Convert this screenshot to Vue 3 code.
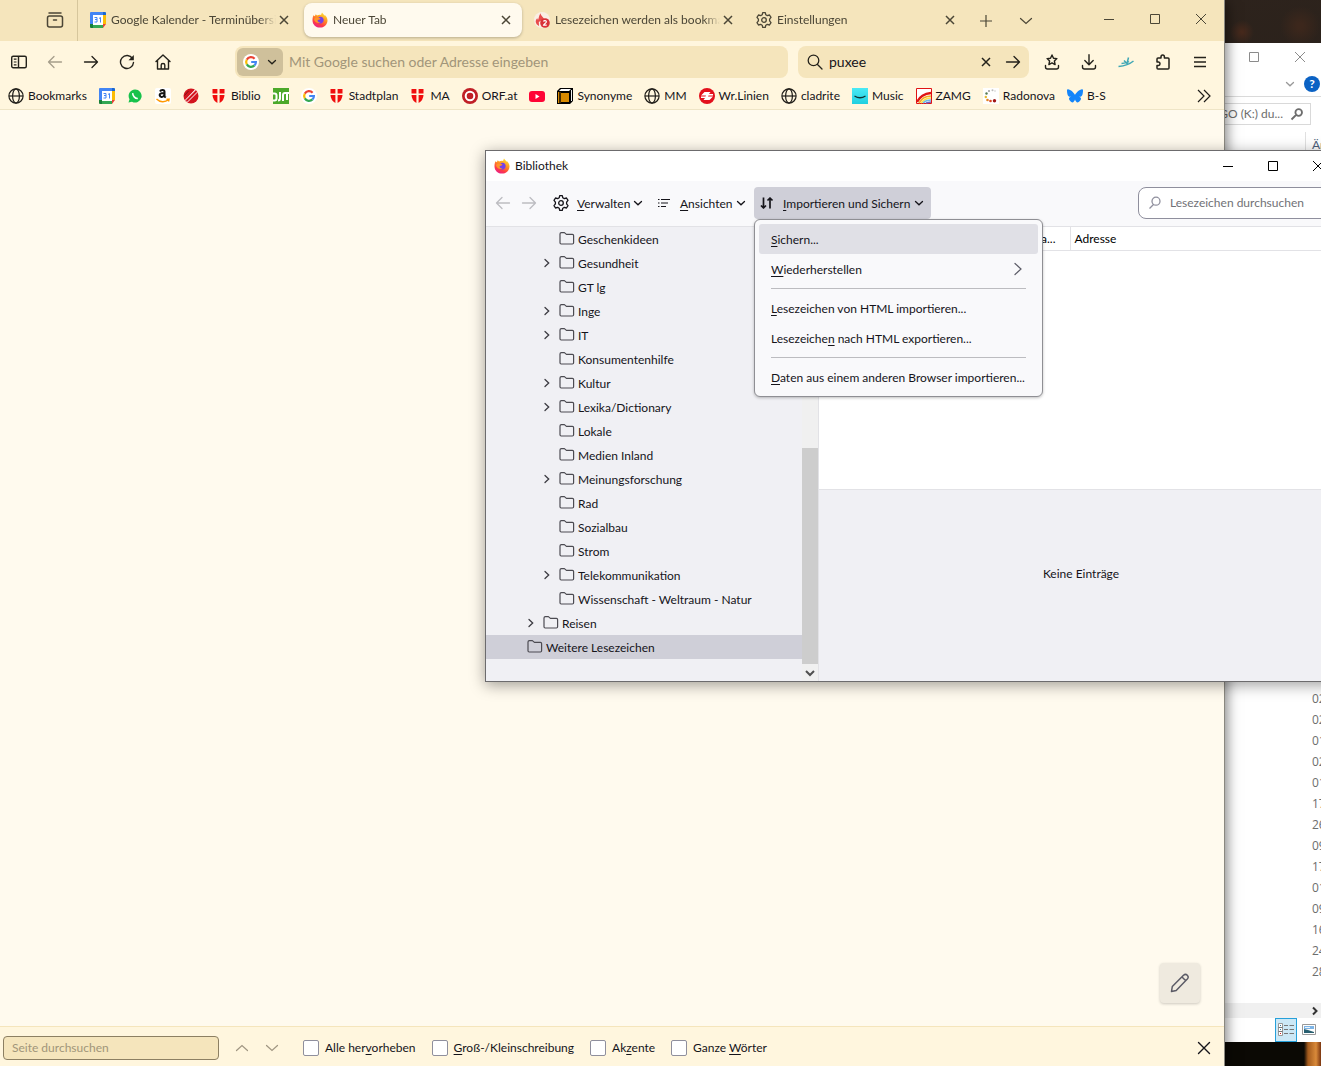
<script setup>
import { ref } from 'vue'

const tabs = [
  { icon: 'calendar', title: 'Google Kalender - Terminübersicht' },
  { icon: 'firefox', title: 'Neuer Tab', active: true },
  { icon: 'flame', title: 'Lesezeichen werden als bookmarks' },
  { icon: 'gear', title: 'Einstellungen' },
]

const bookmarks = [
  { icon: 'globe', label: 'Bookmarks' },
  { icon: 'calendar', name: 'Kalender' },
  { icon: 'whatsapp', name: 'WhatsApp' },
  { icon: 'amazon', name: 'Amazon' },
  { icon: 'redball', name: 'Sport' },
  { icon: 'shield', label: 'Biblio' },
  { icon: 'green', name: 'Forum' },
  { icon: 'google', name: 'Google' },
  { icon: 'shield', label: 'Stadtplan' },
  { icon: 'shield', label: 'MA' },
  { icon: 'orf', label: 'ORF.at' },
  { icon: 'youtube', name: 'YouTube' },
  { icon: 'book', label: 'Synonyme' },
  { icon: 'globe', label: 'MM' },
  { icon: 'linien', label: 'Wr.Linien' },
  { icon: 'globe', label: 'cladrite' },
  { icon: 'music', label: 'Music' },
  { icon: 'zamg', label: 'ZAMG' },
  { icon: 'radonova', label: 'Radonova' },
  { icon: 'butterfly', label: 'B-S' },
]

const folders = [
  { name: 'Geschenkideen', level: 2 },
  { name: 'Gesundheit', level: 2, open: true },
  { name: 'GT lg', level: 2 },
  { name: 'Inge', level: 2, open: true },
  { name: 'IT', level: 2, open: true },
  { name: 'Konsumentenhilfe', level: 2 },
  { name: 'Kultur', level: 2, open: true },
  { name: 'Lexika/Dictionary', level: 2, open: true },
  { name: 'Lokale', level: 2 },
  { name: 'Medien Inland', level: 2 },
  { name: 'Meinungsforschung', level: 2, open: true },
  { name: 'Rad', level: 2 },
  { name: 'Sozialbau', level: 2 },
  { name: 'Strom', level: 2 },
  { name: 'Telekommunikation', level: 2, open: true },
  { name: 'Wissenschaft - Weltraum - Natur', level: 2 },
  { name: 'Reisen', level: 1, open: true },
  { name: 'Weitere Lesezeichen', level: 0, selected: true },
]

// Labels are split around their access key: [before, key, after]
const menu = [
  { label: ['', 'S', 'ichern...'], hover: true },
  { label: ['', 'W', 'iederherstellen'], sub: true },
  null,
  { label: ['', 'L', 'esezeichen von HTML importieren...'] },
  { label: ['Lesezeiche', 'n', ' nach HTML exportieren...'] },
  null,
  { label: ['', 'D', 'aten aus einem anderen Browser importieren...'] },
]

const findOptions = [
  ['Alle her', 'v', 'orheben'],
  ['', 'G', 'roß-/Kleinschreibung'],
  ['Ak', 'z', 'ente'],
  ['Ganze ', 'W', 'örter'],
]

const dates = ['02', '02', '01', '02', '01', '17', '26', '09', '17', '01', '09', '16', '24', '28']

const query = ref('puxee')
</script>

<template>
  <div class="desktop">
    <svg class="sprite" aria-hidden="true">
      <defs>
        <linearGradient id="fox" x1="0.8" y1="0" x2="0.3" y2="1">
          <stop offset="0" stop-color="#ffe83a" /><stop offset="0.4" stop-color="#ff9820" />
          <stop offset="0.75" stop-color="#ff3b45" /><stop offset="1" stop-color="#e8208a" />
        </linearGradient>
        <linearGradient id="aqua" x1="0" y1="0" x2="0" y2="1">
          <stop offset="0" stop-color="#4aeaf5" /><stop offset="1" stop-color="#20cfe0" />
        </linearGradient>
      </defs>
      <symbol id="firefox" viewBox="0 0 16 16">
        <path fill="url(#fox)" d="M1.5 3.2 2.8 4.2 3.8 2.2 5 3.6C6.4 2.8 8 2.7 9 3L10 .4C11 2 12 2.4 12.6 3.6L13.4 3.4C14.8 5 15.6 6.8 15.5 8.7 15.2 12.8 12 15.6 8 15.6S.6 12.6.5 8.4C.5 6.4.7 4.8 1.5 3.2Z" />
        <path fill="#7540e8" d="M8.3 4.7C10.8 4.8 12 6.6 11.6 8.7 11.1 10.9 9.2 11.9 7.3 11.4 5.4 10.9 4.5 9.5 4.8 7.8L7.2 7.5C8.6 7.2 8.8 6.6 7.8 6.2L6.3 5.5C6.8 4.9 7.6 4.7 8.3 4.7Z" />
        <path fill="#ff9428" d="M2 7C3 5 5 5 6.4 6.2L8 6.6C8.4 7.4 6 7.8 5.6 8.3 5.5 9.9 6.8 10.5 8.6 9.8 7 12.2 2.6 10.6 2 7Z" />
      </symbol>
      <symbol id="calendar" viewBox="0 0 16 16">
        <path fill="#4285f4" d="M1 0h12v3H3v9H0V1Q0 0 1 0Z" /><path fill="#1967d2" d="M13 0h2q1 0 1 1v2h-3Z" />
        <path fill="#fbbc04" d="M13 3h3v9h-3Z" /><path fill="#34a853" d="M3 12h10v4H3Z" />
        <path fill="#188038" d="M0 12h3v4H1q-1 0-1-1Z" /><path fill="#ea4335" d="M13 12h3l-3 4Z" /><path fill="#fff" d="M3 3h10v10H3Z" />
        <path fill="none" stroke="#4285f4" stroke-width="1" d="M4.500 5.500h2.500v4.500H4.500M5 7.500h2M9 6.500l1.500-1v5" />
      </symbol>
      <symbol id="flame" viewBox="0 0 16 16">
        <circle cx="8" cy="8" r="8" fill="#faeee4" />
        <path fill="#e84c4c" d="M5 14C1 12 1 8 3.3 6.3L4 8C5 6 4.6 4 6.500 1.200 7 4 8.600 4 10 7L4.800 10Z" />
        <circle cx="11" cy="11" r="4.800" fill="#d93237" />
        <path fill="none" stroke="#fff" stroke-width="1.200" d="M9.500 9.500C10 8 12.600 8.300 12.400 10 12.300 11 9.600 12 9.500 13.200h3.200" />
      </symbol>
      <symbol id="gear" viewBox="0 0 16 16">
        <g fill="none" stroke="currentColor" stroke-width="1.300" stroke-linejoin="round"><circle cx="8" cy="8" r="2.300" />
        <path d="M6.700.700h2.600l.5 2.100 1.500.8 2.200-.6 1.500 2.400-1.400 1.700v1.800l1.400 1.700-1.500 2.400-2.200-.6-1.500.8-.5 2.100H6.700l-.5-2.100-1.500-.8-2.200.6L1 10.600l1.400-1.700V7.100L1 5.400 2.500 3l2.200.6 1.500-.8Z" /></g>
      </symbol>
      <symbol id="globe" viewBox="0 0 16 16">
        <g fill="none" stroke="#1f1d18" stroke-width="1.200"><circle cx="8" cy="8" r="7.100" /><ellipse cx="8" cy="8" rx="3.400" ry="7.100" /><path d="M1 8h14" /></g>
      </symbol>
      <symbol id="whatsapp" viewBox="0 0 16 16">
        <path fill="#17c24b" d="M8 1.500a6.500 6.500 0 1 1-3 12.200L1.500 14.500l1-3.200A6.500 6.500 0 0 1 8 1.500Z" />
        <path fill="none" stroke="#fff" stroke-width="1.600" d="M5.800 5.200C5.400 7.600 8.200 10.800 10.800 10.400" />
      </symbol>
      <symbol id="amazon" viewBox="0 0 16 16">
        <rect width="16" height="16" rx="2" fill="#fff" />
        <path fill="none" stroke="#111" stroke-width="2" d="M5 3.500C6 1.200 9.500 1.500 9.500 3.800V8.500L10.800 9.600M9.400 5C5 5 4.400 6.200 4.700 7.600 5.200 9.600 8.500 9.400 9.300 7" />
        <path fill="none" stroke="#f90" stroke-width="1.400" d="M1.500 11C5 14.500 10 14.500 13.500 11.800M11.500 11.300h2.600l-.6 2.200" />
      </symbol>
      <symbol id="redball" viewBox="0 0 16 16">
        <circle cx="8" cy="8" r="7.500" fill="#d3151e" /><path fill="#fff" d="M2 12 12 1.500l2.500 3L4.500 14.500Z" /><path stroke="#d3151e" stroke-width="2.200" d="M3.500 13l10-10" /><path stroke="#7d1016" d="M1.500 7.500l4-4.500" />
      </symbol>
      <symbol id="shield" viewBox="0 0 16 16">
        <path fill="#f00d0d" d="M1.500 1H6.400v4.500H1.500ZM8.600 1h4.900v4.500H8.600ZM1.500 7h4.900v8Q1.600 12 1.500 7ZM8.600 7h4.900q-.1 5-4.900 8Z" />
      </symbol>
      <symbol id="green" viewBox="0 0 16 16">
        <path fill="#4ca92b" d="M0 0h16v16H0Z" /><path fill="none" stroke="#fff" stroke-width="2" d="M0 5.500h1.500q2 0 2 2v3q0 2-2 2H0M7 4v6.500q0 2-2 2M10 13V7q0-2 2-2h4M14 5v7" />
      </symbol>
      <symbol id="google" viewBox="0 0 16 16">
        <circle cx="8" cy="8" r="8" fill="#fff" /><g fill="none" stroke-width="2.200">
        <path stroke="#ea4335" d="M3.800 5.600A4.900 4.900 0 0 1 11.600 4.700" /><path stroke="#fbbc05" d="M3.800 10.400A5 5 0 0 1 3.800 5.600" />
        <path stroke="#34a853" d="M11.500 11.400A4.900 4.900 0 0 1 3.800 10.400" /><path stroke="#4285f4" d="M8.200 8h4.700Q12.900 10.200 11.500 11.400" /></g>
      </symbol>
      <symbol id="orf" viewBox="0 0 16 16"><circle cx="8" cy="8" r="8" fill="#c01f26" /><circle cx="8" cy="8" r="4.300" fill="none" stroke="#fff" stroke-width="2" /></symbol>
      <symbol id="youtube" viewBox="0 0 16 16"><rect x="0" y="3" width="16" height="11" rx="3" fill="#ff0435" /><path fill="#fff" d="M6.500 6v5L10.500 8.500Z" /></symbol>
      <symbol id="book" viewBox="0 0 16 16"><path d="M3 0h13v13l-3 3H0V3Z" /><path fill="#fff" d="M4 1h10l-2 2H2Z" /><path fill="#d88a00" d="M1 4h1v11H1ZM4 5h8v9H4Z" /><path stroke="#eee" d="M14.500 2v11" /><path stroke="#8c5700" d="M3 4v11" /></symbol>
      <symbol id="linien" viewBox="0 0 16 16"><circle cx="8" cy="8" r="8" fill="#e3101c" /><path fill="#fff" d="M5.500 4h6L10 6H14v1.500H9.500L9 8.500h5L10.500 12h-6L6 10H2V8.500h4.500L7 7.500H2Z" /></symbol>
      <symbol id="music" viewBox="0 0 16 16"><path fill="url(#aqua)" d="M0 0h16v16H0Z" /><path fill="none" stroke="#133" stroke-width="1.300" d="M2.500 8Q8 11.500 13.500 8" /></symbol>
      <symbol id="zamg" viewBox="0 0 16 16">
        <path fill="#fff" stroke="#e01414" d="M.5.500h15v15H.5Z" /><g fill="none" stroke-width="1.600"><path stroke="#e01414" stroke-width="2.400" d="M1 14Q5 6 15 5" /><path stroke="#f7a928" d="M3 15Q7 8 15 8" /><path stroke="#f8e04a" d="M5 15Q9 10 15 10" /><path stroke="#6bb9e8" d="M7 15Q10 12 15 12" /><path stroke="#7060c0" d="M10 15l5-1" /></g>
      </symbol>
      <symbol id="radonova" viewBox="0 0 16 16">
        <path fill="#fff" d="M0 0h16v16H0Z" /><circle cx="6" cy="3" r="1" fill="#999" /><circle cx="9.500" cy="2.300" r="1" fill="#bbb" /><circle cx="12" cy="3" r=".8" fill="#ccc" />
        <circle cx="3.500" cy="5.500" r="1.200" fill="#567b54" /><circle cx="2.800" cy="9" r="1.200" fill="#e3b92c" /><circle cx="4.500" cy="12" r="1.300" fill="#e48325" /><circle cx="7.500" cy="13" r="1.300" fill="#d42" /><circle cx="11.500" cy="12.800" r="1.700" fill="#a01616" />
      </symbol>
      <symbol id="butterfly" viewBox="0 0 16 16"><path fill="#1485fa" d="M8 7C7 4.500 3.500 1.500 1 1.200-.3 1-.1 3 .3 5.500.6 8.300 2 9 4.300 8.800 1.500 9.500 1.500 11 3 12.800 5.500 16 7 14 8 11.500 9 14 10.500 16 13 12.800 14.500 11 14.500 9.500 11.700 8.800 14 9 15.400 8.300 15.700 5.500 16.100 3 16.300 1 15 1.200 12.500 1.500 9 4.500 8 7Z" /></symbol>
      <symbol id="close" viewBox="0 0 16 16"><path stroke="currentColor" stroke-width="1.500" d="m4 4 8 8m0-8-8 8" /></symbol>
      <symbol id="winclose" viewBox="0 0 16 16"><path stroke="currentColor" d="m3 3 10 10m0-10L3 13" /></symbol>
      <symbol id="bigclose" viewBox="0 0 16 16"><path stroke="currentColor" stroke-width="1.400" stroke-linecap="round" d="m2.500 2.500 11 11m0-11-11 11" /></symbol>
      <symbol id="winmax" viewBox="0 0 16 16"><path fill="none" stroke="currentColor" d="M3.500 3.500h9v9h-9Z" /></symbol>
      <symbol id="winmin" viewBox="0 0 16 16"><path stroke="currentColor" d="M3 8.500h10" /></symbol>
      <symbol id="plus" viewBox="0 0 16 16"><path stroke="currentColor" stroke-width="1.200" d="M2 8h12M8 2v12" /></symbol>
      <symbol id="down" viewBox="0 0 16 16"><path fill="none" stroke="currentColor" stroke-width="1.200" stroke-linecap="round" d="m2.500 5.500 5.500 5 5.500-5" /></symbol>
      <symbol id="smalldown" viewBox="0 0 10 10"><path fill="none" stroke="currentColor" stroke-width="1.300" stroke-linecap="round" d="m1.500 3.500 3.500 3.300 3.500-3.300" /></symbol>
      <symbol id="bolddown" viewBox="0 0 10 10"><path fill="none" stroke="currentColor" stroke-width="2" d="m1 3 4 4 4-4" /></symbol>
      <symbol id="boldright" viewBox="0 0 10 10"><path fill="none" stroke="currentColor" stroke-width="2" d="m3 1.500 3.500 3.500L3 8.500" /></symbol>
      <symbol id="twisty" viewBox="0 0 10 10"><path fill="none" stroke="#3c3b42" stroke-width="1.300" stroke-linecap="round" d="m3 1.500 3.700 3.500L3 8.500" /></symbol>
      <symbol id="up" viewBox="0 0 16 16"><path fill="none" stroke="currentColor" stroke-width="1.200" stroke-linecap="round" d="m2.500 10.500 5.500-5 5.500 5" /></symbol>
      <symbol id="right" viewBox="0 0 16 16"><path fill="none" stroke="currentColor" stroke-width="1.200" stroke-linecap="round" d="m5 2.500 6 5.500-6 5.500" /></symbol>
      <symbol id="box" viewBox="0 0 18 16"><g fill="none" stroke="currentColor" stroke-width="1.500" stroke-linecap="round"><path d="M3 1h12" /><rect x="1.500" y="4" width="15" height="11" rx="2" /><path d="M7.500 8h3" /></g></symbol>
      <symbol id="sidebar" viewBox="0 0 16 16"><g fill="none" stroke="currentColor" stroke-width="1.400"><rect x=".7" y="2.200" width="14.600" height="11.600" rx="1.500" /><path d="M7.500 2v12" /><path stroke-width="1.200" d="M2.800 5.200h2.700M2.800 8h2.700M2.800 10.800h2.700" /></g></symbol>
      <symbol id="back" viewBox="0 0 16 16"><path fill="none" stroke="currentColor" stroke-width="1.300" stroke-linecap="round" stroke-linejoin="round" d="M14.500 8h-13M7 2.500 1.500 8 7 13.500" /></symbol>
      <symbol id="forward" viewBox="0 0 16 16"><path fill="none" stroke="currentColor" stroke-width="1.300" stroke-linecap="round" stroke-linejoin="round" d="M1.500 8h13M9 2.500 14.500 8 9 13.500" /></symbol>
      <symbol id="reload" viewBox="0 0 16 16"><path fill="none" stroke="currentColor" stroke-width="1.400" stroke-linecap="round" d="M13.500 4.500A6.500 6.500 0 1 0 14.500 8.500" /><path fill="currentColor" d="M14.800 1v5.300H9.500Z" /></symbol>
      <symbol id="home" viewBox="0 0 16 16"><path fill="none" stroke="currentColor" stroke-width="1.400" stroke-linejoin="round" stroke-linecap="round" d="M1 7.500 8 1l7 6.500M2.500 6.500V15h11V6.500M6.200 15v-4q0-1.500 1.800-1.500T9.800 11v4" /></symbol>
      <symbol id="search" viewBox="0 0 16 16"><path fill="none" stroke="currentColor" stroke-width="1.300" stroke-linecap="round" d="M10.500 10.500 15 15M11.800 6.400A5.300 5.300 0 1 1 1.200 6.400a5.300 5.300 0 0 1 10.600 0Z" /></symbol>
      <symbol id="lens" viewBox="0 0 16 16"><path fill="none" stroke="currentColor" stroke-width="1.300" d="M6.500 9.500 2.500 13.500M13 6.200a4 4 0 1 1-8 0 4 4 0 0 1 8 0Z" /></symbol>
      <symbol id="boldlens" viewBox="0 0 16 16"><path fill="none" stroke="currentColor" stroke-width="1.800" d="M7 9 2.500 13.500M13 6.500a3.300 3.300 0 1 1-6.600 0 3.300 3.300 0 0 1 6.600 0Z" /></symbol>
      <symbol id="star" viewBox="0 0 16 16"><path fill="none" stroke="currentColor" stroke-width="1.400" stroke-linejoin="round" stroke-linecap="round" d="m8 1 1.500 3.200 3.400.4-2.500 2.400.7 3.600L8 8.900l-3.100 1.700.7-3.600-2.500-2.400 3.400-.4ZM1.500 11.500v1.500q0 2 2 2h9q2 0 2-2v-1.500" /></symbol>
      <symbol id="download" viewBox="0 0 16 16"><path fill="none" stroke="currentColor" stroke-width="1.400" stroke-linejoin="round" stroke-linecap="round" d="M8 .800v9.500M3.800 6.500 8 10.700l4.200-4.200M1.500 11.500v1.500q0 2 2 2h9q2 0 2-2v-1.500" /></symbol>
      <symbol id="plane" viewBox="0 0 16 16"><path fill="none" stroke="#3fa7b5" stroke-width="1.500" d="M.5 12.500Q10 11.500 15.500 7M3.500 9.500Q9 9 11 7.500M6 6.500l3 3L10.500 3.500" /></symbol>
      <symbol id="puzzle" viewBox="0 0 16 16"><path fill="none" stroke="currentColor" stroke-width="1.500" stroke-linejoin="round" d="M2 8V5q0-1 1-1h3V3q0-2 1.700-2T9.400 3v1H13q1 0 1 1v9q0 1-1 1H3q-1 0-1-1v-2.500h1.500q1.500-.2 1.500-1.700T3.500 8Z" /></symbol>
      <symbol id="menu" viewBox="0 0 16 16"><path stroke="currentColor" stroke-width="1.500" d="M2 3.500h12M2 8h12M2 12.500h12" /></symbol>
      <symbol id="more" viewBox="0 0 16 16"><path fill="none" stroke="#1f1d18" stroke-width="1.200" d="m2 2 6 6-6 6M8 2l6 6-6 6" /></symbol>
      <symbol id="pencil" viewBox="0 0 20 20"><path fill="none" stroke="currentColor" stroke-width="1.500" stroke-linejoin="round" d="m1.500 18.500.8-5L13.500 2.200q2-1.700 3.800 0 1.800 1.900 0 3.900L6.200 17.500ZM12 4l4 4" /></symbol>
      <symbol id="list" viewBox="0 0 14 12"><path stroke="currentColor" stroke-width="1.200" d="M1 2.500h1.500M4 2.500h9M1 6h1.500M4 6h7M1 9.500h1.500M4 9.500h5" /></symbol>
      <symbol id="arrows" viewBox="0 0 14 14"><path fill="none" stroke="currentColor" stroke-width="1.700" stroke-linejoin="round" d="M3.500 1.500v10.500M1 9.500 3.500 12 6 9.500M10 12.500V2M7.500 4.500 10 2l2.500 2.500" /></symbol>
      <symbol id="folder" viewBox="0 0 16 16"><path fill="none" stroke="#4c4b52" stroke-width="1.200" stroke-linejoin="round" d="M1 3q0-1.400 1.400-1.400h3l2 1.800h6q1.200 0 1.200 1.200v7.200q0 1.200-1.200 1.200H2.200Q1 13 1 11.800Z" /></symbol>
      <symbol id="details" viewBox="0 0 18 14"><path fill="#fff" stroke="#999" d="M1.500.500h4v12h-4Z" /><path stroke="#777" d="M7 2.500h4M12.500 2.500h4.500M7 6.500h4M12.500 6.500h4.500M7 10.500h4M12.500 10.500h4.500M1.500 4.500h4M1.500 8.500h4" /><path stroke="#c22" d="M3 10.500h1" /><path stroke="#379" d="M3 2.500h1M3 6.500h1" /></symbol>
      <symbol id="picture" viewBox="0 0 14 12"><path fill="#fff" stroke="#999" d="M.5.500h13v10H.5Z" /><path fill="#7db4e6" d="M2 2h10v3H2Z" /><path fill="#285f70" d="M2 5l4 1 6 2v1H2Z" /><path fill="#eaf4fb" d="M3 3h5v1H3Z" /></symbol>
    </svg>

    <section class="explorer">
      <header class="ex-title">
        <button aria-label="Maximieren"><svg class="i16"><use href="#winmax" /></svg></button>
        <button aria-label="Schließen"><svg class="i16"><use href="#winclose" /></svg></button>
      </header>
      <div class="ex-ribbon">
        <svg class="i10"><use href="#smalldown" /></svg>
        <button class="help">?</button>
      </div>
      <div class="ex-address">
        <div class="ex-search"><span>GO (K:) du...</span><svg class="i16"><use href="#boldlens" /></svg></div>
      </div>
      <div class="ex-head"><span>Än</span></div>
      <ul class="ex-list"><li v-for="(d, i) in dates" :key="i">{{ d }}</li></ul>
      <div class="ex-scroll"><svg class="i10"><use href="#boldright" /></svg></div>
      <footer class="ex-status">
        <button class="view on" aria-label="Details"><svg width="18" height="14"><use href="#details" /></svg></button>
        <button class="view" aria-label="Große Symbole"><svg width="14" height="12"><use href="#picture" /></svg></button>
      </footer>
    </section>

    <section class="browser">
      <div class="tabstrip">
        <button class="view-btn" aria-label="Firefox View"><svg width="18" height="16"><use href="#box" /></svg></button>
        <div v-for="t in tabs" :key="t.title" class="tab" :class="{ active: t.active }">
          <svg class="i16"><use :href="'#' + t.icon" /></svg>
          <span class="tab-title">{{ t.title }}</span>
          <button aria-label="Tab schließen"><svg class="i16"><use href="#close" /></svg></button>
        </div>
        <button class="new-tab" aria-label="Neuer Tab"><svg class="i16"><use href="#plus" /></svg></button>
        <button class="all-tabs" aria-label="Alle Tabs"><svg class="i16"><use href="#down" /></svg></button>
        <div class="win-controls">
          <button aria-label="Minimieren"><svg class="i16"><use href="#winmin" /></svg></button>
          <button aria-label="Maximieren"><svg class="i16"><use href="#winmax" /></svg></button>
          <button aria-label="Schließen"><svg class="i16"><use href="#winclose" /></svg></button>
        </div>
      </div>

      <div class="navbar">
        <div class="nav-buttons">
          <button aria-label="Seitenleiste"><svg class="i16"><use href="#sidebar" /></svg></button>
          <button aria-label="Zurück" disabled><svg class="i16"><use href="#back" /></svg></button>
          <button aria-label="Vor"><svg class="i16"><use href="#forward" /></svg></button>
          <button aria-label="Neu laden"><svg class="i16"><use href="#reload" /></svg></button>
          <button aria-label="Startseite"><svg class="i16"><use href="#home" /></svg></button>
        </div>
        <div class="urlbar">
          <button class="engine" aria-label="Suchmaschine"><svg class="i16"><use href="#google" /></svg><svg class="i10"><use href="#smalldown" /></svg></button>
          <input type="text" aria-label="Adresse" placeholder="Mit Google suchen oder Adresse eingeben" />
        </div>
        <div class="searchbar">
          <svg class="i16"><use href="#search" /></svg>
          <input v-model="query" type="text" aria-label="Suche" />
          <button aria-label="Leeren"><svg class="i16"><use href="#close" /></svg></button>
          <button aria-label="Suchen"><svg class="i16"><use href="#forward" /></svg></button>
        </div>
        <div class="nav-tools">
          <button v-for="n in ['star', 'download', 'plane', 'puzzle', 'menu']" :key="n" :aria-label="n"><svg class="i16"><use :href="'#' + n" /></svg></button>
        </div>
      </div>

      <nav class="bookmarks">
        <a v-for="(b, i) in bookmarks" :key="i" href="#" :aria-label="b.label || b.name"><svg class="i16"><use :href="'#' + b.icon" /></svg><span v-if="b.label">{{ b.label }}</span></a>
        <button class="overflow" aria-label="Weitere Lesezeichen anzeigen"><svg class="i16"><use href="#more" /></svg></button>
      </nav>

      <main class="page">
        <button class="customize" aria-label="Anpassen"><svg width="20" height="20"><use href="#pencil" /></svg></button>
      </main>

      <div class="findbar">
        <input type="text" aria-label="Seite durchsuchen" placeholder="Seite durchsuchen" />
        <div class="find-arrows">
          <button aria-label="Vorheriges"><svg class="i16"><use href="#up" /></svg></button>
          <button aria-label="Nächstes"><svg class="i16"><use href="#down" /></svg></button>
        </div>
        <label v-for="o in findOptions" :key="o[1]"><input type="checkbox" /><span>{{ o[0] }}<u>{{ o[1] }}</u>{{ o[2] }}</span></label>
        <button class="find-close" aria-label="Schließen"><svg class="i16"><use href="#bigclose" /></svg></button>
      </div>
    </section>

    <section class="library">
      <header class="lib-title">
        <svg class="i16"><use href="#firefox" /></svg><span>Bibliothek</span>
        <div class="lib-controls">
          <button aria-label="Minimieren"><svg class="i16"><use href="#winmin" /></svg></button>
          <button aria-label="Maximieren"><svg class="i16"><use href="#winmax" /></svg></button>
          <button aria-label="Schließen"><svg class="i16"><use href="#winclose" /></svg></button>
        </div>
      </header>
      <div class="lib-tools">
        <div class="history">
          <button aria-label="Zurück"><svg class="i16"><use href="#back" /></svg></button>
          <button aria-label="Vor"><svg class="i16"><use href="#forward" /></svg></button>
        </div>
        <button class="tool manage"><svg class="i16"><use href="#gear" /></svg><span><u>V</u>erwalten</span><svg class="i10"><use href="#smalldown" /></svg></button>
        <button class="tool views"><svg width="14" height="12"><use href="#list" /></svg><span><u>A</u>nsichten</span><svg class="i10"><use href="#smalldown" /></svg></button>
        <div class="import">
          <button class="tool pressed"><svg width="14" height="14"><use href="#arrows" /></svg><span><u>I</u>mportieren und Sichern</span><svg class="i10"><use href="#smalldown" /></svg></button>
          <div class="menu" role="menu">
            <template v-for="(m, i) in menu" :key="i">
              <hr v-if="!m" />
              <button v-else role="menuitem" :class="{ hover: m.hover }"><span>{{ m.label[0] }}<u>{{ m.label[1] }}</u>{{ m.label[2] }}</span><svg v-if="m.sub" class="i16"><use href="#right" /></svg></button>
            </template>
          </div>
        </div>
        <label class="lib-search"><svg class="i16"><use href="#lens" /></svg><input type="text" aria-label="Lesezeichen durchsuchen" placeholder="Lesezeichen durchsuchen" /></label>
      </div>
      <div class="lib-body">
        <ul class="tree">
          <li v-for="f in folders" :key="f.name" :class="['level-' + f.level, { selected: f.selected }]">
            <svg class="i10 twisty"><use v-if="f.open" href="#twisty" /></svg>
            <svg class="i16"><use href="#folder" /></svg><span>{{ f.name }}</span>
          </li>
        </ul>
        <div class="scrollbar"><div class="thumb"></div><svg class="i10"><use href="#bolddown" /></svg></div>
        <div class="content">
          <table>
            <thead><tr><th class="tags">a...</th><th>Adresse</th></tr></thead>
          </table>
          <div class="entries"></div>
          <div class="empty">Keine Einträge</div>
        </div>
      </div>
    </section>
  </div>
</template>

<style>
body { margin: 0; overflow: hidden; }
</style>

<style scoped>
* { box-sizing: border-box; }
.desktop {
  position: relative; height: 100vh; overflow: hidden; font: 12px/16px Lato, "Open Sans", sans-serif; color: #15141a;
  background: linear-gradient(90deg, transparent 0 1304px, #a35a1c 1308px, #d98a3a 1316px, #7a3510) bottom / 100% 24px no-repeat,
    linear-gradient(#0b0904, #0b0904) bottom / 100% 24px no-repeat,
    radial-gradient(circle at 1242px 32px, #46291c 0 1px, transparent 12px),
    radial-gradient(circle at 1300px 26px, #3c271c 0 3px, transparent 20px),
    linear-gradient(170deg, #33271f, #211b17 50%, #2c2019);
}
.sprite { position: absolute; width: 0; height: 0; }
svg { display: block; flex: none; }
.i16 { width: 16px; height: 16px; }
.i10 { width: 10px; height: 10px; }
button { display: flex; align-items: center; justify-content: center; padding: 0; border: 0; background: none; color: inherit; font: inherit; }
input { min-width: 0; margin: 0; border: 0; outline: 0; background: none; font: inherit; color: inherit; padding: 0; }
ul { list-style: none; margin: 0; padding: 0; }
u { text-underline-offset: 2px; }
span { white-space: nowrap; }

.explorer { position: absolute; left: 1200px; right: 0; top: 43px; bottom: 24px; display: flex; flex-direction: column; background: #fff; color: #6d6d6d; }
.ex-title { display: flex; justify-content: flex-end; gap: 30px; height: 28px; align-items: center; padding-right: 13px; color: #8b8b8b; }
.ex-ribbon { display: flex; justify-content: flex-end; align-items: center; gap: 9px; height: 26px; padding-right: 1px; border-bottom: 1px solid #dadada; color: #999; }
.help { width: 16px; height: 16px; border-radius: 50%; background: #0b62c4; color: #fff; font-weight: 700; }
.ex-address { display: flex; height: 35px; padding: 6px 10px 7px 0; }
.ex-search { flex: 1; display: flex; align-items: center; justify-content: flex-end; gap: 6px; padding-right: 5px; border: 1px solid #d9d9d9; }
.ex-head { display: flex; justify-content: flex-end; height: 26px; color: #4c607a; }
.ex-head span { width: 16px; overflow: hidden; border-left: 1px solid #e0e0e0; padding: 5px 0 0 6px; }
.ex-list { flex: 1; display: flex; flex-direction: column; justify-content: flex-end; align-items: flex-end; padding-bottom: 21px; font-family: "Open Sans", sans-serif; }
.ex-list li { width: 9px; line-height: 21px; }
.ex-scroll { display: flex; justify-content: flex-end; align-items: center; height: 15px; background: #f0f0f0; color: #333; padding-right: 1px; }
.ex-status { display: flex; justify-content: flex-end; height: 24px; }
.view { width: 24px; }
.view.on { width: 22px; border: 1px solid #26a0da; background: #cce8f6; }

.browser { position: absolute; inset: 0 97px 0 0; display: flex; flex-direction: column; background: #fffaee; box-shadow: 1px 0 0 #8a8880, 3px 2px 12px rgba(0, 0, 0, .5); }
.tabstrip { display: flex; align-items: stretch; height: 41px; background: #f5e5bc; color: #4b4636; }
.view-btn { width: 78px; padding: 0 0 2px 32px; border-right: 1px solid #d6c69c; margin-right: 4px; }
.tab { display: flex; align-items: center; width: 218px; height: 34px; margin: 3px 4px 0 0; padding: 0 8px; gap: 5px; border-radius: 8px; }
.tab.active { background: #fffaee; box-shadow: 0 1px 3px rgba(0, 0, 0, .25); }
.tab-title { flex: 1; overflow: hidden; margin-right: -5px; mask-image: linear-gradient(90deg, #000 calc(100% - 16px), transparent); }
.tab-title + button { width: 16px; }
.new-tab { width: 40px; margin-left: -4px; }
.all-tabs { width: 40px; }
.win-controls { display: flex; gap: 30px; margin-left: auto; padding: 0 15px 3px 0; }
.navbar { display: flex; align-items: center; height: 41px; padding: 0 16px 0 11px; background: #fff6de; color: #24221b; }
.nav-buttons { display: flex; gap: 20px; }
.nav-buttons button:disabled { color: #a69e8b; }
.urlbar { flex: 1; display: flex; align-items: center; height: 32px; margin-left: 64px; padding: 2px; border-radius: 8px; background: #f5e5bc; font-size: 14px; }
.engine { gap: 8px; width: 46px; height: 28px; border-radius: 6px; background: #cfc09b; margin-right: 6px; }
.urlbar input { flex: 1; }
input::placeholder { color: #a1957a; opacity: 1; }
.searchbar { display: flex; align-items: center; width: 231px; height: 32px; margin: 0 15px 0 10px; padding: 0 8px 0 9px; border-radius: 8px; background: #f5e5bc; font-size: 14px; }
.searchbar input { flex: 1; padding-left: 6px; color: #15141a; }
.searchbar button { margin-left: 11px; }
.nav-tools { display: flex; gap: 21px; }
.bookmarks { display: flex; align-items: center; gap: 12px; height: 28px; padding: 0 12px 0 8px; background: #fff6de; border-bottom: 1px solid #efe5c6; }
.bookmarks a { display: flex; align-items: center; gap: 4px; color: #15141a; text-decoration: none; }
.overflow { margin-left: auto; }
.page { flex: 1; display: flex; justify-content: flex-end; align-items: flex-end; padding: 0 24px 23px 0; }
.customize { width: 40px; height: 40px; border-radius: 4px; background: #efeadf; color: #5b5b66; box-shadow: 0 1px 3px rgba(0, 0, 0, .2); }
.findbar { display: flex; align-items: center; height: 40px; padding: 2px 12px 0 3px; background: #fff6de; border-top: 1px solid #f5e5bc; }
.findbar > input { width: 216px; height: 24px; padding: 0 8px; border: 1px solid #8c7f62; border-radius: 4px; background: #f5e5bc; }
.find-arrows { display: flex; gap: 14px; margin: 0 23px 0 15px; color: #a09682; }
.findbar label { display: flex; align-items: center; gap: 6px; margin-right: 16px; }
.findbar label input { appearance: none; width: 16px; height: 16px; border: 1px solid #8f8f9d; border-radius: 2px; background: #fff; }
.find-close { margin-left: auto; }

.library { position: absolute; left: 485px; right: -23px; top: 150px; height: 532px; display: flex; flex-direction: column; border: 1px solid #6c6b6d; background: #fff; box-shadow: 0 3px 14px rgba(0, 0, 0, .38); }
.lib-title { display: flex; align-items: center; gap: 5px; height: 30px; padding: 0 17px 0 8px; }
.lib-controls { display: flex; gap: 29px; margin-left: auto; color: #000; }
.lib-tools { display: flex; align-items: center; height: 46px; padding: 0 8px 1px; background: #f9f9fb; border-bottom: 1px solid #e2e2e6; }
.history { display: flex; gap: 10px; margin: 0 16px 0 1px; color: #bdbdc1; }
.tool { height: 32px; justify-content: flex-start; gap: 3px; border-radius: 4px; }
.tool span { flex: 1; text-align: left; }
.tool span, .menu span, .tree span { padding-top: 2px; }
.manage { width: 89px; }
.manage .i16 { margin-right: 5px; }
.views { width: 88px; margin-left: 15px; }
.views svg:first-child { margin-right: 6px; }
.views, .import { margin-right: 9px; }
.import { position: relative; }
.pressed { width: 177px; padding: 0 7px 0 6px; background: #cfcfd8; }
.pressed svg:first-child { margin-right: 6px; }
.menu { position: absolute; z-index: 2; left: 0; top: 32px; width: 289px; padding: 4px; border: 1px solid #8f8f94; border-radius: 6px; background: #f9f9fb; box-shadow: 0 1px 3px rgba(0, 0, 0, .25); }
.menu button { display: flex; justify-content: space-between; width: 100%; height: 30px; padding: 0 12px; border-radius: 3px; }
.menu .hover { background: #e0e0e6; }
.menu hr { height: 1px; margin: 4px 12px; border: 0; background: #bcbcc0; }
.menu svg { color: #5b5b66; }
.lib-search { display: flex; align-items: center; gap: 7px; width: 197px; height: 32px; margin-left: auto; padding: 0 8px; border: 1px solid #8f8f9d; border-radius: 8px; background: #fff; color: #8f8f9d; }
.lib-search input { flex: 1; }
.lib-search input::placeholder { color: #717176; }
.lib-body { flex: 1; display: flex; min-height: 0; }
.tree { width: 316px; background: #f0f0f4; }
.tree li { display: flex; align-items: center; height: 24px; }
.tree .twisty { margin-right: 7px; }
.tree span { margin-left: 3px; }
.level-0 { padding-left: 24px; }
.level-1 { padding-left: 40px; }
.level-2 { padding-left: 56px; }
.selected { background: #cfcfd8; }
.scrollbar { display: flex; flex-direction: column; align-items: center; justify-content: flex-end; width: 17px; padding-bottom: 3px; background: #f0f0f0; border-right: 1px solid #e2e2e6; color: #505050; }
.thumb { width: 16px; height: 216px; margin-bottom: 4px; background: #cdcdcd; }
.content { flex: 1; display: flex; flex-direction: column; }
table { width: 100%; border-collapse: collapse; table-layout: fixed; }
th { height: 23px; padding: 2px 4px 0; border-bottom: 1px solid #e2e2e6; text-align: left; font-weight: 400; color: #000; }
.tags { width: 251px; padding-right: 14px; border-right: 1px solid #e2e2e6; text-align: right; }
.entries { flex: 1; }
.empty { display: flex; align-items: center; justify-content: center; height: 192px; padding-bottom: 24px; background: #f0f0f4; border-top: 1px solid #e2e2e6; }
</style>
